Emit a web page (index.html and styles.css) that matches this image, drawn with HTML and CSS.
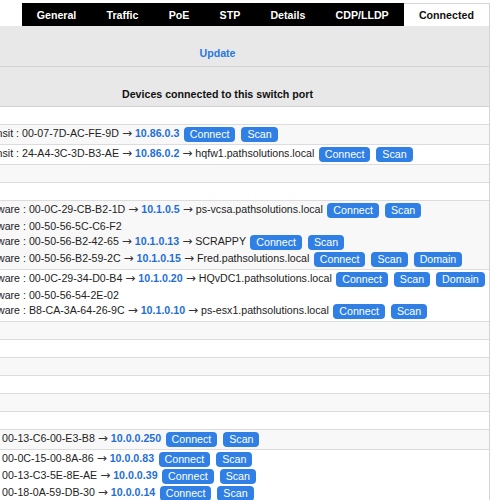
FILE: index.html
```html
<!DOCTYPE html>
<html lang="en">
<head>
  <meta charset="UTF-8">
  <title>Switch port - Connected</title>
  <link rel="stylesheet" href="styles.css">
</head>
<body>

<div class="page">
  <div class="tabs">
    <div class="tab">General</div>
    <div class="tab">Traffic</div>
    <div class="tab">PoE</div>
    <div class="tab">STP</div>
    <div class="tab">Details</div>
    <div class="tab">CDP/LLDP</div>
    <div class="tab active">Connected</div>
  </div>

  <div class="head"><a class="update" href="#">Update</a></div>
  <div class="head title">Devices connected to this switch port</div>

  <div class="rows">
    <div class="row"><div class="line">&nbsp;</div></div>
    <div class="row">
      <div class="line">Transit : 00-07-7D-AC-FE-9D <span class="arr">→</span> <a class="ip">10.86.0.3</a> <button class="btn">Connect</button> <button class="btn">Scan</button></div>
    </div>
    <div class="row">
      <div class="line">Transit : 24-A4-3C-3D-B3-AE <span class="arr">→</span> <a class="ip">10.86.0.2</a> <span class="arr">→</span> hqfw1.pathsolutions.local <button class="btn">Connect</button> <button class="btn">Scan</button></div>
    </div>
    <div class="row"><div class="line">&nbsp;</div></div>
    <div class="row"><div class="line">&nbsp;</div></div>
    <div class="row">
      <div class="line">VMware : 00-0C-29-CB-B2-1D <span class="arr">→</span> <a class="ip">10.1.0.5</a> <span class="arr">→</span> ps-vcsa.pathsolutions.local <button class="btn">Connect</button> <button class="btn">Scan</button></div>
      <div class="line">VMware : 00-50-56-5C-C6-F2</div>
      <div class="line">VMware : 00-50-56-B2-42-65 <span class="arr">→</span> <a class="ip">10.1.0.13</a> <span class="arr">→</span> SCRAPPY <button class="btn">Connect</button> <button class="btn">Scan</button></div>
      <div class="line">VMware : 00-50-56-B2-59-2C <span class="arr">→</span> <a class="ip">10.1.0.15</a> <span class="arr">→</span> Fred.pathsolutions.local <button class="btn">Connect</button> <button class="btn">Scan</button> <button class="btn">Domain</button></div>
    </div>
    <div class="row">
      <div class="line">VMware : 00-0C-29-34-D0-B4 <span class="arr">→</span> <a class="ip">10.1.0.20</a> <span class="arr">→</span> HQvDC1.pathsolutions.local <button class="btn">Connect</button> <button class="btn">Scan</button> <button class="btn">Domain</button></div>
      <div class="line">VMware : 00-50-56-54-2E-02</div>
      <div class="line">VMware : B8-CA-3A-64-26-9C <span class="arr">→</span> <a class="ip">10.1.0.10</a> <span class="arr">→</span> ps-esx1.pathsolutions.local <button class="btn">Connect</button> <button class="btn">Scan</button></div>
    </div>
    <div class="row"><div class="line">&nbsp;</div></div>
    <div class="row"><div class="line">&nbsp;</div></div>
    <div class="row"><div class="line">&nbsp;</div></div>
    <div class="row"><div class="line">&nbsp;</div></div>
    <div class="row"><div class="line">&nbsp;</div></div>
    <div class="row"><div class="line">&nbsp;</div></div>
    <div class="row bare">
      <div class="line">00-13-C6-00-E3-B8 <span class="arr">→</span> <a class="ip">10.0.0.250</a> <button class="btn">Connect</button> <button class="btn">Scan</button></div>
    </div>
    <div class="row bare">
      <div class="line">00-0C-15-00-8A-86 <span class="arr">→</span> <a class="ip">10.0.0.83</a> <button class="btn">Connect</button> <button class="btn">Scan</button></div>
      <div class="line">00-13-C3-5E-8E-AE <span class="arr">→</span> <a class="ip">10.0.0.39</a> <button class="btn">Connect</button> <button class="btn">Scan</button></div>
      <div class="line">00-18-0A-59-DB-30 <span class="arr">→</span> <a class="ip">10.0.0.14</a> <button class="btn">Connect</button> <button class="btn">Scan</button></div>
      <div class="line">00-18-0A-59-DB-31 <span class="arr">→</span> <a class="ip">10.0.0.15</a> <span class="arr">→</span> ps-dc2.pathsolutions.local <button class="btn">Connect</button> <button class="btn">Scan</button></div>
    </div>
  </div>
</div>

</body>
</html>
```

FILE: styles.css
```css
* { box-sizing: border-box; }
html, body {
  margin: 0;
  padding: 0;
  height: 100%;
  overflow: hidden;
  background: #ffffff;
}
body {
  font-family: "Liberation Sans", Arial, sans-serif;
  font-size: 10.65px;
  color: #222;
}

/* page is wider than the window, scrolled a bit to the right */
.page {
  width: 544px;
  margin-left: -54px;
  min-height: 100%;
  border-right: 1px solid #d4d4d4;
}

.tabs {
  display: flex;
  justify-content: flex-end;
  margin-top: 3px;
}
.tab {
  background: #000;
  color: #fff;
  font-weight: bold;
  padding: 0 15.1px;
  height: 23px;
  line-height: 22px;
  border-top: 1px solid #000;
}
.tab.active {
  background: #fff;
  color: #111;
  border-top-color: #d6d6d6;
}

.head {
  background: #e8e8e8;
  text-align: center;
  line-height: 15px;
  padding: 20px 0 5px;
  border-bottom: 1px solid #d2d2d2;
}
.head.title {
  font-weight: bold;
  color: #111;
  padding-bottom: 4px;
}
.update {
  color: #2a78dc;
  font-weight: bold;
  text-decoration: none;
}

.row {
  padding: 1px 0 1px 35px;
  border-bottom: 1px solid #dcdcdc;
}
.row:nth-child(even) { background: #f8f8f8; }
.row.bare { padding-left: 56px; }

.line {
  line-height: 15px;
  white-space: nowrap;
}
.arr {
  color: #333;
  font-family: "DejaVu Sans", sans-serif;
  font-size: 12px;
  line-height: 10px;
}
.ip {
  color: #1f6fd6;
  font-weight: bold;
}

.btn {
  display: inline-block;
  vertical-align: middle;
  height: 15px;
  line-height: 15px;
  margin: 1px 1.5px;
  padding: 0 6px;
  border: none;
  border-radius: 4px;
  background: #2f7fe4;
  color: #fff;
  font-family: inherit;
  font-size: 10.65px;
  cursor: pointer;
}
```
